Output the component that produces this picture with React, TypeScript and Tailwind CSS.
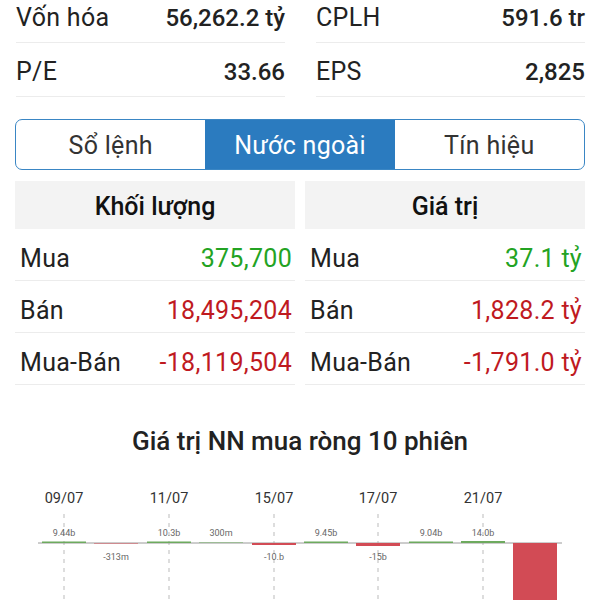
import React from 'react';

const font = { fontFamily: 'Roboto, "Noto Sans", sans-serif' };

const GREEN = 'text-[#23a323]';
const RED = 'text-[#bf1a1f]';

type Bar = { x: number; v: number; label: string };

const bars: Bar[] = [
  { x: 64, v: 1.5, label: '9.44b' },
  { x: 116, v: -0.5, label: '-313m' },
  { x: 169, v: 1.5, label: '10.3b' },
  { x: 221, v: 0.5, label: '300m' },
  { x: 274, v: -2, label: '-10.b' },
  { x: 326, v: 1.5, label: '9.45b' },
  { x: 378, v: -3, label: '-15b' },
  { x: 431, v: 1.5, label: '9.04b' },
  { x: 483, v: 2, label: '14.0b' },
  { x: 535, v: -200, label: '-1.79k' },
];

const dates = [
  { x: 64, t: '09/07' },
  { x: 169, t: '11/07' },
  { x: 274, t: '15/07' },
  { x: 378, t: '17/07' },
  { x: 483, t: '21/07' },
];

function StatRow({ label, value }: { label: string; value: string }) {
  return (
    <div className="flex h-[54px] items-center justify-between border-b border-[#ececec] pt-[5px]">
      <span className="text-[25px] tracking-[0.3px] text-[#222]">{label}</span>
      <span className="text-[24px] font-medium text-[#222]">{value}</span>
    </div>
  );
}

function TableRow({ label, value, color }: { label: string; value: string; color: string }) {
  return (
    <div className="flex h-[52px] items-center justify-between border-b border-[#ececec] pl-[5px] pr-[3px] pt-[8px]">
      <span className="text-[25px] tracking-[0.3px] text-[#222]">{label}</span>
      <span className={`text-[25px] tracking-[0.3px] ${color}`}>{value}</span>
    </div>
  );
}

function Chart() {
  const base = 72;
  return (
    <svg width="600" height="130" viewBox="0 0 600 130" className="block">
      {dates.map((d) => (
        <g key={d.t}>
          <text x={d.x} y={32} textAnchor="middle" fontSize="14.5" fill="#333" style={font}>
            {d.t}
          </text>
          <line x1={d.x} y1={43} x2={d.x} y2={130} stroke="#bbb" strokeWidth="1" strokeDasharray="4 5" />
        </g>
      ))}
      <line x1={38} y1={base} x2={562} y2={base} stroke="#9a9a9a" strokeWidth="1" />
      {bars.map((b) => {
        const h = Math.abs(b.v);
        const y = b.v >= 0 ? base - h : base;
        return (
          <g key={b.x}>
            <rect x={b.x - 22} y={y} width={44} height={h} fill={b.v >= 0 ? '#6daa5e' : '#d24b55'} />
            {b.v > -100 && (
              <text
                x={b.x}
                y={b.v >= 0 ? base - 7 : base + 17}
                textAnchor="middle"
                fontSize="9"
                fill="#666"
                style={font}
              >
                {b.label}
              </text>
            )}
          </g>
        );
      })}
    </svg>
  );
}

export default function App() {
  return (
    <div className="h-[600px] w-[600px] overflow-hidden bg-white" style={font}>
      <div className="-mt-[11px] grid grid-cols-2 gap-x-[31px] pl-[16px] pr-[15px]">
        <div>
          <StatRow label="Vốn hóa" value="56,262.2 tỷ" />
          <StatRow label="P/E" value="33.66" />
        </div>
        <div>
          <StatRow label="CPLH" value="591.6 tr" />
          <StatRow label="EPS" value="2,825" />
        </div>
      </div>

      <div className="mx-[15px] mt-[22px] flex h-[51px] overflow-hidden rounded-[7px] border border-[#3a86c4]">
        <div className="flex flex-1 items-center justify-center pt-[3px] text-[25px] tracking-[0.3px] text-[#333]">Sổ lệnh</div>
        <div className="flex flex-1 items-center justify-center bg-[#2b7bbf] pt-[3px] text-[25px] tracking-[0.3px] text-white">
          Nước ngoài
        </div>
        <div className="flex flex-1 items-center justify-center pt-[3px] text-[25px] tracking-[0.3px] text-[#333]">Tín hiệu</div>
      </div>

      <div className="mt-[11px] grid grid-cols-2 gap-x-[10px] px-[15px]">
        <div>
          <div className="flex h-[48px] items-center justify-center bg-[#f3f3f3] pt-[4px] text-[25px] font-medium text-[#111]">
            Khối lượng
          </div>
          <TableRow label="Mua" value="375,700" color={GREEN} />
          <TableRow label="Bán" value="18,495,204" color={RED} />
          <TableRow label="Mua-Bán" value="-18,119,504" color={RED} />
        </div>
        <div>
          <div className="flex h-[48px] items-center justify-center bg-[#f3f3f3] pt-[4px] text-[25px] font-medium text-[#111]">
            Giá trị
          </div>
          <TableRow label="Mua" value="37.1 tỷ" color={GREEN} />
          <TableRow label="Bán" value="1,828.2 tỷ" color={RED} />
          <TableRow label="Mua-Bán" value="-1,791.0 tỷ" color={RED} />
        </div>
      </div>

      <div className="mt-[37px] text-center text-[26px] font-medium text-[#222]">Giá trị NN mua ròng 10 phiên</div>

      <div className="mt-[10px]">
        <Chart />
      </div>
    </div>
  );
}
